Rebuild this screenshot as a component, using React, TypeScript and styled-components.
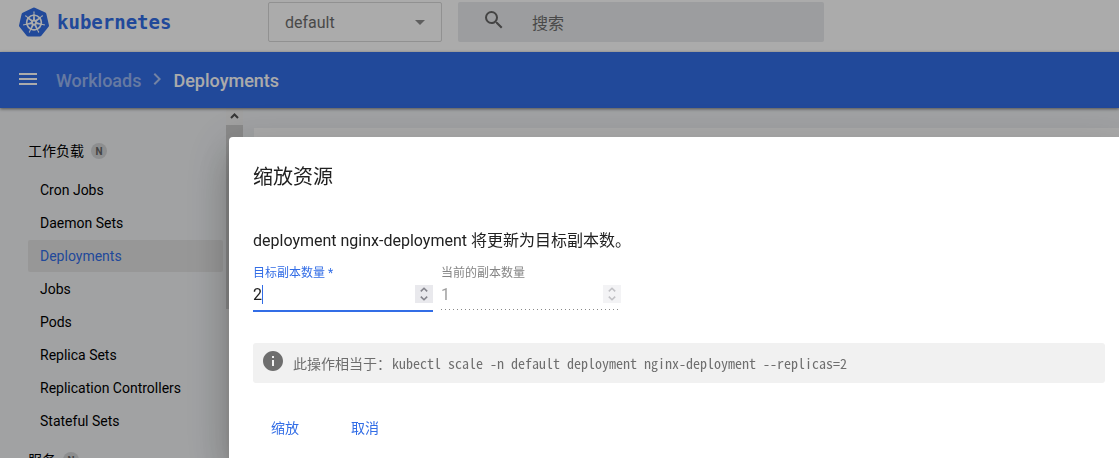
import React, { useState } from "react";
import styled, { createGlobalStyle } from "styled-components";
import { SiKubernetes } from "react-icons/si";
import {
  MdMenu,
  MdChevronRight,
  MdSearch,
  MdInfo,
  MdArrowDropDown,
} from "react-icons/md";

const sans = `Roboto, "Noto Sans CJK SC", sans-serif`;

const GlobalStyle = createGlobalStyle`
  *, *::before, *::after { box-sizing: border-box; }
  body { margin: 0; font-family: ${sans}; font-size: 14px; color: #000; }
  button, input, select { font-family: inherit; }
`;

const Page = styled.div`
  display: flex;
  flex-direction: column;
  height: 100vh;
  overflow: hidden;
  background: #f0f2f4;
`;

const Header = styled.header`
  display: flex;
  align-items: center;
  padding: 2px 24px 10px 19px;
  background: #fff;
`;

const Brand = styled.a`
  display: flex;
  align-items: center;
  gap: 8px;
  flex: 0 0 249px;
  color: #326de6;
  text-decoration: none;
  font-family: "DejaVu Sans Mono", monospace;
  font-size: 19px;
  font-weight: 700;
`;

const NamespaceBox = styled.div`
  position: relative;
  flex: 0 0 174px;
  height: 40px;

  svg {
    position: absolute;
    top: 8px;
    right: 10px;
    color: #8c8c8c;
    pointer-events: none;
  }
`;

const Namespace = styled.select`
  width: 100%;
  height: 100%;
  padding: 0 16px;
  border: 1px solid #d8d8d8;
  border-radius: 2px;
  appearance: none;
  background: transparent;
  color: #6e6e6e;
  font-size: 16px;
`;

const Search = styled.label`
  display: flex;
  align-items: center;
  gap: 26px;
  flex: 0 1 366px;
  height: 40px;
  margin-left: 16px;
  padding-left: 24px;
  border-radius: 2px;
  background: #e9ebed;
  color: #666;

  svg {
    flex: none;
    margin-bottom: 4px;
  }
`;

const SearchInput = styled.input`
  flex: 1;
  min-width: 0;
  border: 0;
  padding: 2px 0 0;
  outline: 0;
  background: none;
  font-size: 16px;

  &::placeholder {
    color: #6e6e6e;
    opacity: 1;
  }
`;

const ActionBar = styled.nav`
  position: relative;
  display: flex;
  align-items: center;
  flex: none;
  height: 56px;
  padding: 0 16px;
  background: #326de6;
  box-shadow: 0 1px 3px rgba(0, 0, 0, 0.5);
  color: #fff;
  font-size: 18px;
  font-weight: 500;
`;

const MenuButton = styled.button`
  display: flex;
  margin: 0 16px 2px 0;
  padding: 0;
  border: 0;
  background: none;
  color: inherit;
`;

const Crumb = styled.a<{ $current?: boolean }>`
  color: ${(p) => (p.$current ? "#fff" : "rgba(255, 255, 255, 0.5)")};
  text-decoration: none;
`;

const CrumbArrow = styled(MdChevronRight)`
  margin: 0 4px 2px;
  opacity: 0.6;
`;

const Body = styled.div`
  display: flex;
  flex: 1;
  min-height: 0;
`;

const Sidebar = styled.aside`
  flex: 0 0 226px;
  padding: 35px 3px 0 28px;
  overflow: hidden;
`;

const Group = styled.section`
  margin-bottom: 15px;
`;

const GroupTitle = styled.h2`
  display: flex;
  align-items: center;
  gap: 7px;
  margin: 0 0 15px;
  font-size: 14px;
  font-weight: 400;
  line-height: 16px;
`;

const Badge = styled.span`
  width: 16px;
  height: 16px;
  border-radius: 8px;
  background: #d3d4d5;
  color: #666;
  font-size: 10px;
  font-weight: 700;
  line-height: 17px;
  text-align: center;
`;

const NavList = styled.div`
  display: flex;
  flex-direction: column;
  gap: 1px;
`;

const NavItem = styled.a<{ $active?: boolean }>`
  padding: 0 12px;
  border-radius: 2px;
  background: ${(p) => (p.$active ? "#e2e2e2" : "none")};
  color: ${(p) => (p.$active ? "#326de6" : "#000")};
  line-height: 32px;
  text-decoration: none;
`;

const ScrollTrack = styled.div`
  flex: 0 0 17px;
  background: #f0f0f0;
`;

const ScrollArrow = styled.svg`
  display: block;
  width: 17px;
  height: 17px;
`;

const ScrollThumb = styled.div`
  height: 184px;
  background: #cdcdcd;
`;

const Content = styled.main`
  flex: 1;
  padding: 20px 0 0 11px;
`;

const Card = styled.div`
  height: 100%;
  background: #fff;
`;

const Scrim = styled.div`
  position: fixed;
  inset: 0;
  overflow: hidden;
  padding: 137px 0 0 229px;
  background: rgba(0, 0, 0, 0.33);
`;

const Dialog = styled.form`
  height: 100%;
  margin-right: -10px;
  padding: 24px;
  border-radius: 4px 4px 0 0;
  background: #fff;
  box-shadow: 0 11px 15px -7px rgba(0, 0, 0, 0.2),
    0 24px 38px 3px rgba(0, 0, 0, 0.14), 0 9px 46px 8px rgba(0, 0, 0, 0.12);
  color: #212121;
`;

const Title = styled.h1`
  margin: 0 0 36px;
  font-size: 20px;
  font-weight: 400;
  line-height: 32px;
`;

const Message = styled.p`
  margin: 0 0 12px;
  font-size: 16px;
  line-height: 24px;
`;

const Fields = styled.div`
  display: flex;
  gap: 8px;
`;

const Field = styled.div<{ $disabled?: boolean }>`
  width: 180px;
  height: 47px;
  border-bottom: 2px solid ${(p) => (p.$disabled ? "transparent" : "#326de6")};
  color: ${(p) => (p.$disabled ? "#9e9e9e" : "#212121")};
  ${(p) =>
    p.$disabled &&
    `background: repeating-linear-gradient(to right, #888 0 1px, transparent 1px 4px) 0 100% / 100% 1px no-repeat;`}

  label {
    display: block;
    margin-bottom: 3px;
    color: ${(p) => (p.$disabled ? "#858585" : "#326de6")};
    font-size: 12px;
    line-height: 16px;
  }
`;

const FieldRow = styled.div`
  position: relative;
  display: flex;
  align-items: center;
  height: 20px;
`;

const NumberInput = styled.input`
  flex: 1;
  min-width: 0;
  height: 20px;
  padding: 0;
  border: 0;
  outline: 0;
  appearance: textfield;
  background: none;
  caret-color: transparent;
  color: inherit;
  font-size: 16px;

  &::-webkit-inner-spin-button {
    appearance: none;
    margin: 0;
  }
`;

const Caret = styled.span`
  position: absolute;
  left: 9px;
  width: 1px;
  height: 19px;
  background: #326de6;
`;

const Spinner = styled.div<{ $disabled?: boolean }>`
  display: flex;
  flex-direction: column;
  width: 18px;
  height: 18px;
  background: #e9e9ed;
  opacity: ${(p) => (p.$disabled ? 0.5 : 1)};
`;

const StepButton = styled.button`
  display: flex;
  align-items: center;
  justify-content: center;
  flex: 1;
  min-height: 0;
  padding: 0;
  border: 0;
  background: none;
`;

const Notice = styled.div`
  display: flex;
  align-items: center;
  height: 40px;
  margin: 31px 0 26px;
  padding: 0 8px;
  border-radius: 3px;
  background: #f1f1f1;
  color: #6e6e6e;

  svg {
    flex: none;
    margin: 0 8px 4px 0;
  }

  code {
    margin-left: 1px;
    font-family: "Noto Sans Mono CJK SC", "Liberation Mono", monospace;
    font-size: 14px;
  }
`;

const Actions = styled.div`
  display: flex;
  gap: 16px;
`;

const TextButton = styled.button`
  height: 36px;
  padding: 0 18px;
  border: 0;
  background: none;
  color: #326de6;
  font-size: 14px;
`;

const Arrow = ({ down }: { down?: boolean }) => (
  <svg width="8" height="5" viewBox="0 0 8 5" fill="none" stroke="#84848c" strokeWidth="1.6">
    <path d={down ? "M.8.6 4 3.7 7.2.6" : "M.8 4.4 4 1.3 7.2 4.4"} />
  </svg>
);

const workloads = [
  "Cron Jobs",
  "Daemon Sets",
  "Deployments",
  "Jobs",
  "Pods",
  "Replica Sets",
  "Replication Controllers",
  "Stateful Sets",
];

export default function App() {
  const [replicas, setReplicas] = useState(2);

  return (
    <>
      <GlobalStyle />
      <Page>
        <Header>
          <Brand href="#">
            <SiKubernetes size={30} />
            kubernetes
          </Brand>
          <NamespaceBox>
            <Namespace aria-label="Namespace">
              <option>default</option>
            </Namespace>
            <MdArrowDropDown size={24} />
          </NamespaceBox>
          <Search>
            <MdSearch size={24} />
            <SearchInput type="text" placeholder="搜索" aria-label="搜索" />
          </Search>
        </Header>
        <ActionBar>
          <MenuButton type="button" aria-label="Menu">
            <MdMenu size={24} />
          </MenuButton>
          <Crumb href="#workloads">Workloads</Crumb>
          <CrumbArrow size={24} />
          <Crumb href="#deployments" $current>
            Deployments
          </Crumb>
        </ActionBar>
        <Body>
          <Sidebar>
            <Group>
              <GroupTitle>
                工作负载<Badge>N</Badge>
              </GroupTitle>
              <NavList>
                {workloads.map((name) => (
                  <NavItem key={name} href="#" $active={name === "Deployments"}>
                    {name}
                  </NavItem>
                ))}
              </NavList>
            </Group>
            <Group>
              <GroupTitle>
                服务<Badge>N</Badge>
              </GroupTitle>
            </Group>
          </Sidebar>
          <ScrollTrack>
            <ScrollArrow viewBox="0 0 17 17" fill="none" stroke="#505050" strokeWidth="2">
              <path d="M5 10 8.5 6.500l3.500 3.500" />
            </ScrollArrow>
            <ScrollThumb />
          </ScrollTrack>
          <Content>
            <Card />
          </Content>
        </Body>
      </Page>
      <Scrim>
        <Dialog onSubmit={(e) => e.preventDefault()}>
          <Title>缩放资源</Title>
          <Message>deployment nginx-deployment 将更新为目标副本数。</Message>
          <Fields>
            <Field>
              <label htmlFor="desired">目标副本数量 *</label>
              <FieldRow>
                <NumberInput
                  id="desired"
                  type="number"
                  value={replicas}
                  onChange={(e) => setReplicas(Number(e.target.value))}
                />
                <Caret />
                <Spinner>
                  <StepButton type="button" aria-label="+1" onClick={() => setReplicas(replicas + 1)}>
                    <Arrow />
                  </StepButton>
                  <StepButton
                    type="button"
                    aria-label="-1"
                    onClick={() => setReplicas(Math.max(0, replicas - 1))}
                  >
                    <Arrow down />
                  </StepButton>
                </Spinner>
              </FieldRow>
            </Field>
            <Field $disabled>
              <label htmlFor="current">当前的副本数量</label>
              <FieldRow>
                <NumberInput id="current" type="number" value={1} disabled readOnly />
                <Spinner $disabled>
                  <StepButton type="button" aria-label="+1" disabled>
                    <Arrow />
                  </StepButton>
                  <StepButton type="button" aria-label="-1" disabled>
                    <Arrow down />
                  </StepButton>
                </Spinner>
              </FieldRow>
            </Field>
          </Fields>
          <Notice>
            <MdInfo size={24} />
            <span>此操作相当于：</span>
            <code>kubectl scale -n default deployment nginx-deployment --replicas={replicas}</code>
          </Notice>
          <Actions>
            <TextButton type="submit">缩放</TextButton>
            <TextButton type="button">取消</TextButton>
          </Actions>
        </Dialog>
      </Scrim>
    </>
  );
}
